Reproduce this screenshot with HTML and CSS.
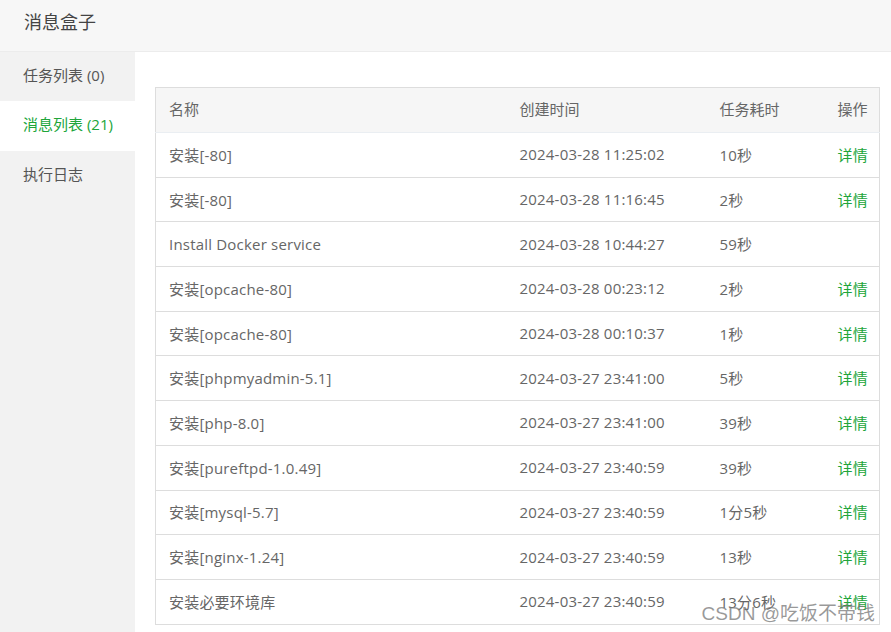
FILE: index.html
```html
<!DOCTYPE html>
<html lang="zh">
<head>
<meta charset="utf-8">
<title>消息盒子</title>
<link rel="stylesheet" href="styles.css">
</head>
<body>
<div class="box">
  <div class="box-header">消息盒子</div>
  <div class="box-body">
    <ul class="side">
      <li class="side-item">任务列表 (0)</li>
      <li class="side-item active">消息列表 (21)</li>
      <li class="side-item">执行日志</li>
    </ul>
    <div class="content">
      <table class="tbl">
        <colgroup><col class="c1"><col class="c2"><col class="c3"><col class="c4"></colgroup>
        <thead>
          <tr><th>名称</th><th>创建时间</th><th>任务耗时</th><th>操作</th></tr>
        </thead>
        <tbody>
          <tr><td>安装[-80]</td><td>2024-03-28 11:25:02</td><td>10秒</td><td class="op">详情</td></tr>
          <tr><td>安装[-80]</td><td>2024-03-28 11:16:45</td><td>2秒</td><td class="op">详情</td></tr>
          <tr><td>Install Docker service</td><td>2024-03-28 10:44:27</td><td>59秒</td><td class="op"></td></tr>
          <tr><td>安装[opcache-80]</td><td>2024-03-28 00:23:12</td><td>2秒</td><td class="op">详情</td></tr>
          <tr><td>安装[opcache-80]</td><td>2024-03-28 00:10:37</td><td>1秒</td><td class="op">详情</td></tr>
          <tr><td>安装[phpmyadmin-5.1]</td><td>2024-03-27 23:41:00</td><td>5秒</td><td class="op">详情</td></tr>
          <tr><td>安装[php-8.0]</td><td>2024-03-27 23:41:00</td><td>39秒</td><td class="op">详情</td></tr>
          <tr><td>安装[pureftpd-1.0.49]</td><td>2024-03-27 23:40:59</td><td>39秒</td><td class="op">详情</td></tr>
          <tr><td>安装[mysql-5.7]</td><td>2024-03-27 23:40:59</td><td>1分5秒</td><td class="op">详情</td></tr>
          <tr><td>安装[nginx-1.24]</td><td>2024-03-27 23:40:59</td><td>13秒</td><td class="op">详情</td></tr>
          <tr><td>安装必要环境库</td><td>2024-03-27 23:40:59</td><td>13分6秒</td><td class="op">详情</td></tr>
        </tbody>
      </table>
    </div>
  </div>
  <div class="watermark">CSDN @吃饭不带钱</div>
</div>
</body>
</html>
```
FILE: styles.css
```css
* { box-sizing: border-box; }
html, body { margin: 0; padding: 0; }
body {
  width: 891px;
  height: 632px;
  overflow: hidden;
  font-family: "Open Sans", "Noto Sans CJK SC", sans-serif;
  font-size: 15px;
  color: #666;
  background: #fff;
}
.box {
  position: relative;
  height: 632px;
  display: flex;
  flex-direction: column;
}
.box-header {
  height: 52px;
  flex: none;
  background: #f7f7f7;
  border-bottom: 1px solid #ececec;
  padding: 0 24px;
  font-size: 18px;
  line-height: 44px;
  color: #444;
}
.box-body {
  flex: 1;
  display: flex;
  min-height: 0;
}
.side {
  list-style: none;
  margin: 0;
  padding: 0;
  width: 135px;
  flex: none;
  background: #f2f2f2;
}
.side-item {
  height: 49px;
  line-height: 46px;
  padding-left: 23px;
  font-size: 15px;
  color: #555;
}
.side-item.active {
  height: 50px;
  background: #fff;
  color: #20a53a;
}
.content {
  flex: 1;
  padding: 35px 12px 0 20px;
}
.tbl {
  width: 724px;
  border-collapse: collapse;
  table-layout: fixed;
  border: 1px solid #ddd;
  font-size: 15px;
}
.c1 { width: 351px; }
.c2 { width: 200px; }
.c3 { width: 118px; }
.c4 { width: 55px; }
.tbl th {
  height: 45px;
  background: #f6f6f6;
  font-weight: normal;
  text-align: left;
  padding: 0 0 3px 13px;
  color: #666;
  border-bottom: 1px solid #eaeef2;
}
.tbl td {
  height: 44.7px;
  padding: 0 0 1px 13px;
  border-bottom: 1px solid #ddd;
  white-space: nowrap;
  letter-spacing: 0.2px;
}
.op { color: #20a53a; }
.watermark {
  position: absolute;
  right: 16px;
  bottom: 7px;
  font-family: "Liberation Sans", "Noto Sans CJK SC", sans-serif;
  font-size: 19px;
  color: rgba(120, 120, 120, 0.75);
}
```
